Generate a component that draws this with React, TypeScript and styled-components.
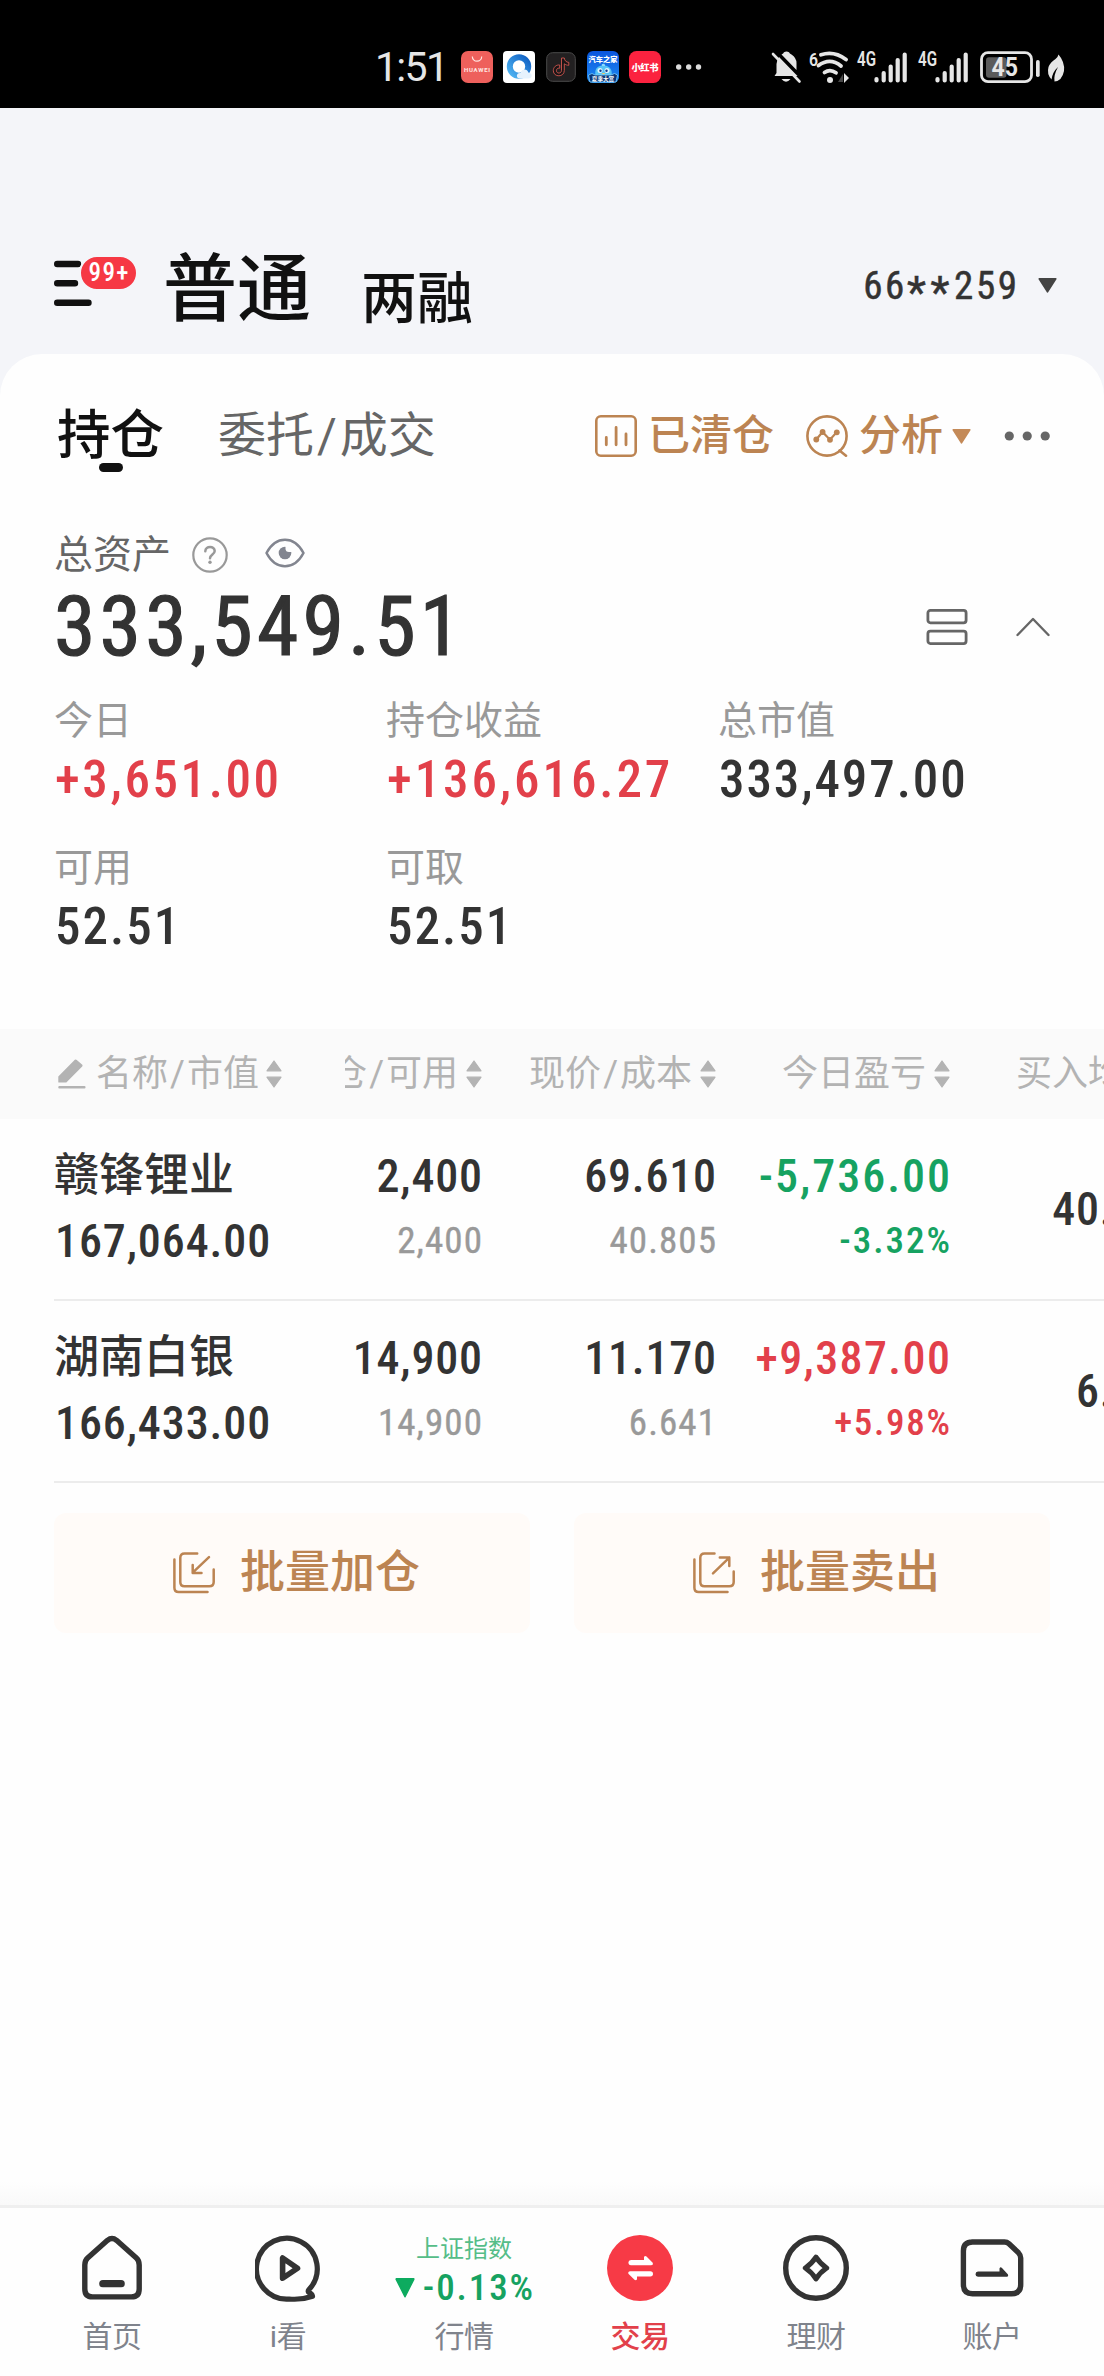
import React from "react";
import styled, { createGlobalStyle, css } from "styled-components";

const GlobalStyle = createGlobalStyle`
  html, body { margin: 0; padding: 0; background: #fefefe; }
  *, *::before, *::after { box-sizing: border-box; }
  svg { display: block; flex: none; }
`;

const INK = "#333333";
const RED = "#e2404a";
const GREEN = "#16a261";
const GOLD = "#bc8452";

const NUM_FONT = '"Roboto Condensed", Roboto, sans-serif';

/* Narrow figures; the negative margin drops the tracking after the last one. */
const tracked = (ls: number) => css`
  font-family: ${NUM_FONT};
  letter-spacing: ${ls}px;
  margin-right: ${-ls}px;
`;

const Page = styled.div`
  width: 1104px;
  height: 2376px;
  display: flex;
  flex-direction: column;
  overflow: hidden;
  background: #f4f5f9;
  color: ${INK};
  font-family: Roboto, "Noto Sans CJK SC", sans-serif;
  white-space: nowrap;
`;

/* ---------- status bar ---------- */

const StatusBar = styled.div`
  flex: none;
  height: 108px;
  padding: 26px 39px 0 375px;
  display: flex;
  align-items: center;
  background: #000;
  color: #e6e6e6;
`;

const Clock = styled.div`
  width: 86px;
  font-size: 41px;
  line-height: 44px;
  letter-spacing: -1.7px;
`;

const AppIcons = styled.div`
  display: flex;
  align-items: center;
  gap: 10px;
`;

const StatusRight = styled.div`
  margin-left: auto;
  display: flex;
  align-items: center;
`;

/* ---------- account header ---------- */

const Header = styled.header`
  flex: none;
  height: 246px;
  padding: 142px 47px 0 54px;
`;

const HeaderRow = styled.div`
  height: 80px;
  display: flex;
  align-items: center;
`;

const MenuButton = styled.div`
  margin-top: -18px;
`;

const ModeTab = styled.div<{ $active?: boolean }>`
  margin-left: ${(p) => (p.$active ? 25 : 50)}px;
  margin-top: ${(p) => (p.$active ? 0 : 18)}px;
  font-size: ${(p) => (p.$active ? 74 : 56)}px;
  line-height: 80px;
  font-weight: 500;
  color: #111;
`;

const Account = styled.div`
  margin-left: auto;
  margin-top: -9px;
  display: flex;
  align-items: center;
  gap: 21px;
  font-size: 39px;
  line-height: 44px;
`;

const AccountNo = styled.span`
  ${tracked(2.6)}
  -webkit-text-stroke: 0.5px ${INK};
`;

const Stars = styled.span`
  font-size: 44px;
  line-height: 0;
  vertical-align: -9px;
  letter-spacing: 4.6px;
`;

/* ---------- sheet ---------- */

const Sheet = styled.main`
  flex: 1;
  display: flex;
  flex-direction: column;
  min-height: 0;
  border-radius: 42px 42px 0 0;
  background: #fefefe;
`;

const TabsRow = styled.div`
  height: 84px;
  margin: 40px 54px 0 57px;
  display: flex;
  align-items: center;
`;

const Tab = styled.div<{ $active?: boolean }>`
  position: relative;
  font-size: ${(p) => (p.$active ? 53.5 : 48)}px;
  line-height: 60px;
  font-weight: ${(p) => (p.$active ? 500 : 400)};
  color: ${(p) => (p.$active ? "#111" : "#666")};
  margin-right: 54px;
  &::after {
    content: "";
    display: ${(p) => (p.$active ? "block" : "none")};
    position: absolute;
    left: 42px;
    top: 57px;
    width: 24px;
    height: 9px;
    border-radius: 5px;
    background: #111;
  }
`;

const Slash = styled.span<{ $gap?: number }>`
  margin: 0 ${(p) => p.$gap ?? 1}px;
`;

const Actions = styled.div`
  margin-left: auto;
  display: flex;
  align-items: center;
  color: ${GOLD};
  font-size: 42px;
  line-height: 50px;
  font-weight: 500;
`;

const ActionLabel = styled.span<{ $after: number }>`
  margin: 0 ${(p) => p.$after}px 0 11px;
`;

const DotsButton = styled.div`
  margin-left: 33px;
`;

const AssetLabel = styled.div`
  margin: 52px 54px 0;
  height: 50px;
  display: flex;
  align-items: center;
  font-size: 39px;
  line-height: 50px;
  color: #666;
  svg:nth-of-type(1) { margin-left: 21px; }
  svg:nth-of-type(2) { margin: -5px 0 0 37px; }
`;

const TotalRow = styled.div`
  margin: 5px 54px 0;
  height: 84px;
  display: flex;
  align-items: center;
  justify-content: space-between;
`;

const Total = styled.div`
  ${tracked(4.1)}
  font-size: 84px;
  line-height: 84px;
  -webkit-text-stroke: 1.2px ${INK};
`;

const TotalTools = styled.div`
  display: flex;
  align-items: center;
  gap: 48px;
`;

const Stats = styled.div`
  margin: 29px 54px 0;
  display: grid;
  grid-template-columns: repeat(3, 332px);
  row-gap: 40px;
`;

const Stat = styled.div`
  height: 107px;
  display: flex;
  flex-direction: column;
  gap: 11px;
`;

const StatLabel = styled.div`
  font-size: 39px;
  line-height: 46px;
  color: #999;
`;

const StatValue = styled.div<{ $color?: string; $ls: number }>`
  ${(p) => tracked(p.$ls)}
  padding-left: 1px;
  font-size: 51px;
  line-height: 50px;
  font-weight: 500;
  color: ${(p) => p.$color ?? INK};
`;

/* ---------- holdings table ---------- */

const HeadRow = styled.div`
  margin-top: 77px;
  height: 90px;
  padding-left: 54px;
  display: flex;
  background: #fafafa;
  color: #b3b3b3;
  font-size: 36px;
  line-height: 90px;
`;

const BodyRow = styled.div`
  height: 182px;
  margin-left: 54px;
  display: flex;
  border-bottom: 2px solid #ececec;
`;

const FixedCell = styled.div`
  flex: none;
  width: 291px;
`;

const HeadFixed = styled(FixedCell)`
  padding-left: 4px;
  display: flex;
  align-items: center;
  gap: 10px;
`;

const Scroller = styled.div`
  flex: 1;
  min-width: 0;
  overflow: hidden;
`;

const Track = styled.div`
  display: flex;
  width: 936px;
  height: 100%;
  margin-left: -97px;
`;

const HeadCell = styled.div`
  width: 234px;
  display: flex;
  align-items: center;
  justify-content: flex-end;
  gap: 8px;
`;

const HeadLabel = styled.div`
  display: flex;
  align-items: center;
  gap: 7px;
`;

const Stack = styled.div<{ $right?: boolean; $center?: boolean }>`
  width: ${(p) => (p.$right ? "234px" : "auto")};
  height: 180px;
  padding-top: ${(p) => (p.$center ? 0 : 34)}px;
  display: flex;
  flex-direction: column;
  justify-content: ${(p) => (p.$center ? "center" : "flex-start")};
  align-items: ${(p) => (p.$right ? "flex-end" : "flex-start")};
  gap: 19px;
`;

const StockName = styled.div`
  font-size: 45px;
  line-height: 46px;
  font-weight: 500;
`;

const Num = styled.div<{ $color?: string; $ls?: number }>`
  ${(p) => tracked(p.$ls ?? 0.8)}
  font-size: 46px;
  line-height: 46px;
  font-weight: 500;
  color: ${(p) => p.$color ?? INK};
`;

const MarketValue = styled(Num)`
  padding-left: 1px;
`;

const SubNum = styled.div<{ $color?: string; $ls?: number }>`
  ${(p) => tracked(p.$ls ?? 1.1)}
  font-size: 37px;
  line-height: 46px;
  font-weight: ${(p) => (p.$color ? 500 : 400)};
  -webkit-text-stroke: ${(p) => (p.$color ? "0" : "0.4px #999")};
  color: ${(p) => p.$color ?? "#999"};
`;

/* ---------- batch buttons ---------- */

const BatchRow = styled.div`
  margin: 30px 54px 0;
  display: grid;
  grid-template-columns: 1fr 1fr;
  gap: 44px;
`;

const BatchButton = styled.div`
  height: 120px;
  padding-left: 118px;
  display: flex;
  align-items: center;
  gap: 24px;
  border-radius: 12px;
  background: #fffbf8;
  color: ${GOLD};
  font-size: 45px;
  line-height: 50px;
  font-weight: 500;
`;

/* ---------- bottom navigation ---------- */

const NavShade = styled.div`
  margin-top: auto;
  height: 24px;
  background: linear-gradient(#fefefe, #f9f9f9);
`;

const Nav = styled.nav`
  flex: none;
  height: 171px;
  padding: 26px 24px 0;
  border-top: 3px solid #efefef;
  display: grid;
  grid-template-columns: repeat(6, 176px);
  background: #fefefe;
`;

const NavItem = styled.div`
  display: flex;
  flex-direction: column;
  align-items: center;
`;

const NavFigure = styled.div`
  height: 68px;
  margin-bottom: 18px;
`;

const NavLabel = styled.div<{ $active?: boolean }>`
  font-size: 30px;
  line-height: 34px;
  letter-spacing: -0.4px;
  color: ${(p) => (p.$active ? RED : "#7f838c")};
  font-weight: ${(p) => (p.$active ? 500 : 400)};
`;

const IndexName = styled.div`
  font-size: 24px;
  line-height: 30px;
  text-align: center;
  color: #55bd88;
`;

const IndexChange = styled.div`
  margin-top: 8px;
  display: flex;
  align-items: center;
  gap: 8px;
  font-size: 37px;
  line-height: 32px;
  font-weight: 500;
  color: ${GREEN};
`;

const IndexRate = styled.span`
  ${tracked(1.9)}
`;

/* ---------- drawings ---------- */

const Triangle = ({ color, w = 19, h = 15 }: { color: string; w?: number; h?: number }) => (
  <svg width={w} height={h} viewBox="0 0 19 15" preserveAspectRatio="none">
    <path d="M1.2 .8H17.8L9.5 13.8Z" fill={color} stroke={color} strokeWidth="1.6" strokeLinejoin="round" />
  </svg>
);

const Sort = () => (
  <svg width="16" height="28" viewBox="0 0 16 28">
    <path d="M8 1L15 10.8H1ZM8 27L15 17.2H1Z" fill="#b3b3b3" stroke="#b3b3b3" strokeWidth="1.2" strokeLinejoin="round" />
  </svg>
);

const HuaweiIcon = () => (
  <svg width="32" height="32" viewBox="0 0 32 32">
    <rect width="32" height="32" rx="7" fill="#ee605c" />
    <path d="M11.3 5.5A4.7 4.7 0 0 0 20.7 5.5" fill="none" stroke="#ffe3df" strokeWidth="1.2" />
    <text x="16" y="20.6" fontSize="6" fontWeight="700" textAnchor="middle" fill="#ffe9e6" textLength="26">HUAWEI</text>
  </svg>
);

const BrowserIcon = () => (
  <svg width="32" height="32" viewBox="0 0 32 32">
    <defs>
      <linearGradient id="ring" x1="0" y1="1" x2="1" y2="0">
        <stop offset="0" stopColor="#4fb4f2" />
        <stop offset="1" stopColor="#1161c4" />
      </linearGradient>
    </defs>
    <rect width="32" height="32" rx="4" fill="#fff" />
    <circle cx="16" cy="15.5" r="9.2" fill="none" stroke="url(#ring)" strokeWidth="6" />
    <path d="M17 27.500C12.500 27.500 13 21.500 17.500 22C18.500 17.500 24.500 17.500 25.300 21.500C30 22 29.500 27.500 25.500 27.500Z" fill="#e6f2fd" />
  </svg>
);

const NoteIcon = () => (
  <svg width="32" height="32" viewBox="0 0 32 32">
    <rect x="1.700" y="1.700" width="28.600" height="28.600" rx="6" fill="#222021" stroke="#4b4b4b" />
    <path d="M16.500 7H19.300C19.600 9.800 21.300 11.200 23.800 11.400V14.300C22 14.300 20.500 13.700 19.300 12.800V19.500C19.300 26.500 8.500 26.500 8.300 19.800C8.300 16 11.300 13.600 14.700 14V17.200C12.500 16.800 11.300 18.200 11.400 19.800C11.600 23 16.400 22.700 16.500 19.500Z" fill="#1a1516" stroke="#c0504a" strokeWidth="1" />
  </svg>
);

const AutoIcon = () => (
  <svg width="32" height="32" viewBox="0 0 32 32">
    <defs>
      <linearGradient id="sky" x1="0" y1="0" x2="0" y2="1">
        <stop offset="0" stopColor="#0a55dd" />
        <stop offset="1" stopColor="#1f8cf3" />
      </linearGradient>
    </defs>
    <rect width="32" height="32" rx="6" fill="url(#sky)" />
    <path d="M8.500 25C7 16 12 14.500 16.500 14.500S26 17 24.500 25Z" fill="#55c3f7" />
    <path d="M15 15Q14 12.500 17 12.800Q18.500 13.500 18 15Z" fill="#8ddcfb" />
    <circle cx="13" cy="19.500" r="2.500" fill="#dff5ff" /><circle cx="20" cy="19.500" r="2.500" fill="#dff5ff" />
    <circle cx="13.500" cy="19.800" r="1.200" fill="#123a8c" /><circle cx="19.500" cy="19.800" r="1.200" fill="#123a8c" />
    <path d="M14.500 22H18.500L16.500 23.500Z" fill="#ffc95a" />
    <path d="M1.500 24L5 22.500L8 24H24L27.500 22.500L30.500 24L29 31H3Z" fill="#0b3779" stroke="#7fd0ff" strokeWidth=".8" />
    <text x="16" y="10.800" fontSize="7.200" fontWeight="900" textAnchor="middle" fill="#fff">汽车之家</text>
    <text x="16" y="29.600" fontSize="5.600" fontWeight="700" textAnchor="middle" fill="#fff">夏季大赏</text>
  </svg>
);

const RedBookIcon = () => (
  <svg width="32" height="32" viewBox="0 0 32 32">
    <rect width="32" height="32" rx="7.500" fill="#fb223f" />
    <text x="16" y="19.600" fontSize="9.300" fontWeight="900" textAnchor="middle" fill="#fff" textLength="27">小红书</text>
  </svg>
);

const MoreDots = () => (
  <svg width="40" height="32" viewBox="0 0 40 32">
    <circle cx="7.700" cy="16" r="2.700" fill="#dcdcdc" />
    <circle cx="17.700" cy="16" r="2.700" fill="#dcdcdc" />
    <circle cx="27.500" cy="16" r="2.700" fill="#dcdcdc" />
  </svg>
);

/* Bell, Wi-Fi, both mobile signals, battery and power-saving leaf. */
const SystemIcons = () => (
  <svg width="295" height="34" viewBox="0 0 295 34" fill="#e6e6e6">
    <path d="M4.500 26L6.500 23V14Q7 9.500 9 7L25.500 24L27.500 26Z" />
    <path d="M11.500 4.500Q13.500 3.500 14 2.200Q16.500 .8 19 2.200Q19.500 3.500 21.500 4.500Q26.500 8 26.500 13V20Z" />
    <path d="M11.500 29H20.500Q16 34.500 11.500 29Z" />
    <path d="M3 4L29.500 31.500" stroke="#e6e6e6" strokeWidth="2.600" strokeLinecap="round" />
    <text x="39" y="15.500" fontSize="18" fontWeight="600" textLength="9" lengthAdjust="spacingAndGlyphs">6</text>
    <g fill="none" stroke="#e6e6e6" strokeWidth="3.800" strokeLinecap="round">
      <path d="M51 4.800Q64 .5 76 9.500" />
      <path d="M48.500 15.500Q60 7 71 16" />
      <path d="M54.500 22.500Q60 18.500 66 22.800" />
    </g>
    <circle cx="60" cy="30" r="3" />
    <path d="M72 24V32H67Z" fill="#454545" transform="translate(1 0)" />
    <path d="M74 23V33L79 28Z" />
    <g fontSize="19.500" fontWeight="600">
      <text x="87" y="15.800" textLength="19" lengthAdjust="spacingAndGlyphs">4G</text>
      <text x="148" y="15.800" textLength="19" lengthAdjust="spacingAndGlyphs">4G</text>
    </g>
    {[0, 61].map((dx) => (
      <g key={dx} transform={`translate(${dx} 0)`} stroke="#e6e6e6" strokeWidth="4.200" strokeLinecap="round">
        <path d="M106.500 29V30.500M113.700 23V30.500M120.700 16.500V30.500M127.700 10V30.500M134.700 4.500V30.500" />
      </g>
    ))}
    <rect x="211.500" y="2.700" width="50" height="29" rx="6.500" fill="none" stroke="#e6e6e6" strokeWidth="2.800" />
    <rect x="216" y="7.200" width="20.500" height="20.500" rx="3" fill="#5b5b5b" />
    <rect x="266" y="10" width="3.700" height="17" rx="1.800" />
    <text x="221.500" y="26.200" fontSize="25" fontWeight="700" textLength="26.500" lengthAdjust="spacingAndGlyphs">45</text>
    <path d="M288.500 4.500Q295 12 294 21Q292 31 284.500 31.500Q283.500 25 288 17Q282.500 22 281.500 29.500Q276.500 24 278.500 17Q280.500 12 285.500 9Q288 7 288.500 4.500Z" />
  </svg>
);

const MenuIcon = () => (
  <svg width="84" height="50" viewBox="0 0 84 50">
    <g stroke="#111" strokeWidth="6.400" strokeLinecap="round">
      <path d="M3.200 8H24M3.200 27.300H21M3.200 46.800H34.500" />
    </g>
    <rect x="26" y="0" width="57" height="34" rx="17" fill="#f63844" stroke="#f4f5f9" strokeWidth="2" />
    <text x="54.500" y="25.400" fontSize="25" fontFamily={NUM_FONT} fill="#fff" textAnchor="middle" fontWeight="500" textLength="40">99+</text>
  </svg>
);

const ChartIcon = () => (
  <svg width="42" height="42" viewBox="0 0 42 42" fill="none" stroke={GOLD} strokeWidth="2.600" strokeLinecap="round">
    <rect x="1.300" y="1.300" width="39.400" height="39.400" rx="4.500" />
    <path d="M11.300 22.500V29.800M21.100 12.500V29.800M31 19V29.800" strokeWidth="2.800" />
  </svg>
);

const AnalysisIcon = () => (
  <svg width="42" height="42" viewBox="0 0 42 42" fill="none" stroke={GOLD} strokeWidth="2.600" strokeLinecap="round">
    <circle cx="21" cy="21" r="19.600" />
    <path d="M33.500 35.500L40 40.700" />
    <path d="M10.500 24.300L16.500 17L24 24.700L30.600 17.300" strokeWidth="2.200" />
    <g fill={GOLD} stroke="none">
      <circle cx="10.300" cy="24.500" r="2.900" /><circle cx="16.600" cy="17" r="2.900" />
      <circle cx="24" cy="24.800" r="2.900" /><circle cx="30.800" cy="17.300" r="2.900" />
    </g>
  </svg>
);

const Dots = () => (
  <svg width="46" height="12" viewBox="0 0 46 12" fill="#666">
    <circle cx="5.300" cy="6" r="4.600" /><circle cx="23.200" cy="6" r="4.600" /><circle cx="41.200" cy="6" r="4.600" />
  </svg>
);

const HelpIcon = () => (
  <svg width="36" height="36" viewBox="0 0 36 36" fill="none" stroke="#999" strokeWidth="2.200" strokeLinecap="round">
    <circle cx="18" cy="18" r="16.700" />
    <path d="M13.300 14.300C13.500 8.500 22.700 8.700 22.700 14C22.700 17.500 18 17.500 18 21.300" strokeWidth="2.500" />
    <circle cx="18" cy="25.300" r="1.700" fill="#999" stroke="none" />
  </svg>
);

const EyeIcon = () => (
  <svg width="40" height="30" viewBox="0 0 40 30">
    <path d="M1.500 15Q8.500 1.800 20 1.800T38.500 15Q31.500 28.200 20 28.200T1.500 15Z" fill="none" stroke="#82858f" strokeWidth="2.500" strokeLinejoin="round" />
    <circle cx="20" cy="15" r="6.300" fill="#82858f" />
    <path d="M20.500 7.500V10.500Q20.500 14 24 14H27.500V7.500Z" fill="#fefefe" />
  </svg>
);

const ListIcon = () => (
  <svg width="42" height="38" viewBox="0 0 42 38" fill="none" stroke="#666" strokeWidth="2.800">
    <rect x="1.900" y="2.400" width="38.200" height="12.400" rx="2.500" />
    <rect x="1.900" y="23.200" width="38.200" height="12.400" rx="2.500" />
  </svg>
);

const ChevronUp = () => (
  <svg width="34" height="20" viewBox="0 0 34 20" fill="none" stroke="#666" strokeWidth="2.400" strokeLinecap="round" strokeLinejoin="round">
    <path d="M1.500 18L17 2L32.500 18" />
  </svg>
);

const EditIcon = () => (
  <svg width="28" height="30" viewBox="0 0 28 30" fill="#b3b3b3">
    <path d="M.3 17.500L16.800 .8Q17.800 0 18.800 .9L24.300 5.800Q25 6.800 24.200 7.600L8.300 23.600H1Q.3 23.600 .3 23Z" />
    <rect x=".3" y="27" width="27.200" height="2.600" rx="1" />
  </svg>
);

const BatchIcon = ({ out }: { out?: boolean }) => (
  <svg width="44" height="44" viewBox="0 0 44 44" fill="none" stroke={GOLD} strokeWidth="2.500" strokeLinecap="round" strokeLinejoin="round">
    <path d={out ? "M22.500 2.500H12.500Q8.300 2.500 8.300 6.700V31Q8.300 35.300 12.500 35.300H37.300Q41.700 35.300 41.700 31V20.500" : "M25.200 2.500H12.500Q8.300 2.500 8.300 6.700V31Q8.300 35.300 12.500 35.300H37.300Q41.700 35.300 41.700 31V18.500"} />
    <path d="M2.400 8.500V36.700Q2.400 41 6.700 41H35.500" />
    <path d={out ? "M21 22.300L37.300 6.600M27.800 6.600H37.300V15" : "M37 6.200L20.700 21.700M20.700 14V21.900H29.500"} />
  </svg>
);

const HomeIcon = () => (
  <svg width="66" height="68" viewBox="0 0 66 68" fill="none" stroke={INK} strokeWidth="5.400" strokeLinecap="round" strokeLinejoin="round">
    <path d="M5.800 31Q5.800 26.500 8.600 24L28.500 6.300Q33 2.700 37.500 6.300L57.400 24Q60.200 26.500 60.200 31V55Q60.200 62.900 52.500 62.900H13.500Q5.800 62.900 5.800 55Z" />
    <path d="M23.800 49.700H42.200" strokeWidth="7.200" />
  </svg>
);

const WatchIcon = () => (
  <svg width="66" height="68" viewBox="0 0 66 68" fill="none" stroke={INK} strokeWidth="5.200" strokeLinecap="round" strokeLinejoin="round">
    <path d="M54 55.500A30.400 30.400 0 1 0 34 65C42.500 65.800 51 64.500 57.500 62.200Q57 59.500 54 58.700Q52.300 57.500 54 55.500Z" />
    <path d="M27.600 24V44.300L42.500 34.200Z" strokeWidth="5.600" />
  </svg>
);

const TradeIcon = () => (
  <svg width="66" height="68" viewBox="0 0 66 68" fill="#fff">
    <circle cx="33" cy="34" r="33" fill="#f73a46" />
    <path d="M24 26H37V23Q38 21.300 39.500 22.500L45.700 28.800Q46.500 31.300 44 31.300H24Q21.400 31.100 21.400 28.600Q21.400 26.200 24 26Z" />
    <path d="M43.300 42.500H30V45.300Q29 46.800 27.500 45.700L21.400 39.700Q20.700 37.200 23.200 37.200H43.300Q46 37.400 46 39.900Q46 42.300 43.300 42.500Z" />
  </svg>
);

const WealthIcon = () => (
  <svg width="66" height="68" viewBox="0 0 66 68" fill="none" stroke={INK} strokeWidth="5.400" strokeLinejoin="round">
    <circle cx="33" cy="34" r="30.300" />
    <path d="M33 23.200Q37 29.500 43.700 34Q37 38.500 33 44.800Q29 38.500 22.300 34Q29 29.500 33 23.200Z" strokeWidth="5" />
  </svg>
);

const ProfileIcon = () => (
  <svg width="66" height="68" viewBox="0 0 66 68" fill="none" stroke={INK} strokeWidth="5.400" strokeLinejoin="round">
    <path d="M13 8H45.500Q48 8 50 9.800L59.500 18.800Q61.700 21 61.700 24V50.500Q61.700 59.700 52.500 59.700H13.500Q4.400 59.700 4.400 50.500V17Q4.400 8 13.500 8Z" />
    <path d="M19 37.600H40.500V34.500Q41.300 32.300 43 34L49 40.400Q49.800 42.800 47 42.800H19Q16.500 42.600 16.500 40.200T19 37.600Z" fill={INK} stroke="none" />
  </svg>
);

/* ---------- data ---------- */

const stats = [
  { label: "今日", value: "+3,651.00", color: RED, ls: 2.6 },
  { label: "持仓收益", value: "+136,616.27", color: RED, ls: 2.9 },
  { label: "总市值", value: "333,497.00", ls: 1.9 },
  { label: "可用", value: "52.51", ls: 2 },
  { label: "可取", value: "52.51", ls: 2 },
];

const holdings = [
  {
    name: "赣锋锂业", value: "167,064.00", qty: "2,400", price: "69.610", cost: "40.805",
    gain: "-5,736.00", rate: "-3.32%", avg: "40.805", color: GREEN, ls: 2, rateLs: 2,
  },
  {
    name: "湖南白银", value: "166,433.00", qty: "14,900", price: "11.170", cost: "6.641",
    gain: "+9,387.00", rate: "+5.98%", avg: "6.641", color: RED, ls: 1.4, rateLs: 1.7,
  },
];

export default function App() {
  return (
    <Page>
      <GlobalStyle />
      <StatusBar>
        <Clock>1:51</Clock>
        <AppIcons>
          <HuaweiIcon />
          <BrowserIcon />
          <NoteIcon />
          <AutoIcon />
          <RedBookIcon />
          <MoreDots />
        </AppIcons>
        <StatusRight>
          <SystemIcons />
        </StatusRight>
      </StatusBar>

      <Header>
        <HeaderRow>
          <MenuButton><MenuIcon /></MenuButton>
          <ModeTab $active>普通</ModeTab>
          <ModeTab>两融</ModeTab>
          <Account>
            <AccountNo>66<Stars>**</Stars>259</AccountNo>
            <Triangle color="#444" />
          </Account>
        </HeaderRow>
      </Header>

      <Sheet>
        <TabsRow>
          <Tab $active>持仓</Tab>
          <Tab>委托<Slash $gap={3}>/</Slash>成交</Tab>
          <Actions>
            <ChartIcon />
            <ActionLabel $after={32}>已清仓</ActionLabel>
            <AnalysisIcon />
            <ActionLabel $after={9}>分析</ActionLabel>
            <Triangle color="#c48a58" />
            <DotsButton><Dots /></DotsButton>
          </Actions>
        </TabsRow>

        <AssetLabel>
          总资产
          <HelpIcon />
          <EyeIcon />
        </AssetLabel>
        <TotalRow>
          <Total>333,549.51</Total>
          <TotalTools>
            <ListIcon />
            <ChevronUp />
          </TotalTools>
        </TotalRow>

        <Stats>
          {stats.map((s) => (
            <Stat key={s.label}>
              <StatLabel>{s.label}</StatLabel>
              <StatValue $color={s.color} $ls={s.ls}>{s.value}</StatValue>
            </Stat>
          ))}
        </Stats>

        <HeadRow>
          <HeadFixed>
            <EditIcon />
            <HeadLabel><span>名称<Slash $gap={2}>/</Slash>市值</span><Sort /></HeadLabel>
          </HeadFixed>
          <Scroller>
            <Track>
              <HeadCell><span>持仓<Slash $gap={2}>/</Slash>可用</span><Sort /></HeadCell>
              <HeadCell><span>现价<Slash $gap={2}>/</Slash>成本</span><Sort /></HeadCell>
              <HeadCell><span>今日盈亏</span><Sort /></HeadCell>
              <HeadCell><span>买入均价</span><Sort /></HeadCell>
            </Track>
          </Scroller>
        </HeadRow>

        {holdings.map((h) => (
          <BodyRow key={h.name}>
            <FixedCell>
              <Stack>
                <StockName>{h.name}</StockName>
                <MarketValue $ls={0.9}>{h.value}</MarketValue>
              </Stack>
            </FixedCell>
            <Scroller>
              <Track>
                <Stack $right>
                  <Num>{h.qty}</Num>
                  <SubNum>{h.qty}</SubNum>
                </Stack>
                <Stack $right>
                  <Num>{h.price}</Num>
                  <SubNum>{h.cost}</SubNum>
                </Stack>
                <Stack $right>
                  <Num $color={h.color} $ls={h.ls}>{h.gain}</Num>
                  <SubNum $color={h.color} $ls={h.rateLs}>{h.rate}</SubNum>
                </Stack>
                <Stack $right $center>
                  <Num>{h.avg}</Num>
                </Stack>
              </Track>
            </Scroller>
          </BodyRow>
        ))}

        <BatchRow>
          <BatchButton><BatchIcon />批量加仓</BatchButton>
          <BatchButton><BatchIcon out />批量卖出</BatchButton>
        </BatchRow>
        <NavShade />
      </Sheet>

      <Nav>
        <NavItem>
          <NavFigure><HomeIcon /></NavFigure>
          <NavLabel>首页</NavLabel>
        </NavItem>
        <NavItem>
          <NavFigure><WatchIcon /></NavFigure>
          <NavLabel>i看</NavLabel>
        </NavItem>
        <NavItem>
          <NavFigure>
            <IndexName>上证指数</IndexName>
            <IndexChange><Triangle color="#0dab5f" w={20} h={20} /><IndexRate>-0.13%</IndexRate></IndexChange>
          </NavFigure>
          <NavLabel>行情</NavLabel>
        </NavItem>
        <NavItem>
          <NavFigure><TradeIcon /></NavFigure>
          <NavLabel $active>交易</NavLabel>
        </NavItem>
        <NavItem>
          <NavFigure><WealthIcon /></NavFigure>
          <NavLabel>理财</NavLabel>
        </NavItem>
        <NavItem>
          <NavFigure><ProfileIcon /></NavFigure>
          <NavLabel>账户</NavLabel>
        </NavItem>
      </Nav>
    </Page>
  );
}
